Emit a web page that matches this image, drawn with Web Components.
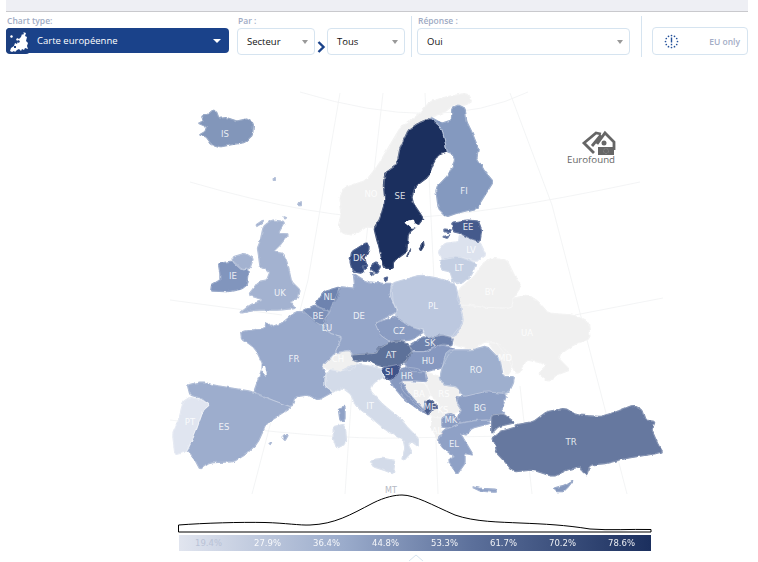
<!DOCTYPE html>
<html lang="fr">
<head>
<meta charset="utf-8">
<title>Carte européenne</title>
<style>
	html, body { margin: 0; padding: 0; background: #fff; font-family: "Open Sans", "Noto Sans", sans-serif; }
	body { width: 758px; height: 562px; overflow: hidden; }
</style>
</head>
<body>
<chart-toolbar>
	<chart-type-select label="Chart type:">Carte européenne</chart-type-select>
	<toolbar-field label="Par :">
		<field-select style="width:78px">Secteur</field-select>
		<svg width="12" height="27" viewBox="0 0 12 27"><path d="M3.500 14l5 5-5 5" fill="none" stroke="#1a428a" stroke-width="2.400"/></svg>
		<field-select style="width:78px">Tous</field-select>
	</toolbar-field>
	<toolbar-divider style="margin-left:6px"></toolbar-divider>
	<toolbar-field label="Réponse :" style="margin-left:5px">
		<field-select style="width:213px">Oui</field-select>
	</toolbar-field>
	<toolbar-divider style="margin-left:11px"></toolbar-divider>
	<eu-toggle style="margin-left:10px">EU only</eu-toggle>
</chart-toolbar>
<euro-map></euro-map>

<script>
// barre du haut
class ChartToolbar extends HTMLElement {
	constructor() {
		super();
		this.attachShadow({mode: "open"});
		this.shadowRoot.innerHTML = `
			<style>
				:host{display:block;height:58px;}
				.band{height:11px;margin:0 10px 0 6px;background:#eeeff4;border-bottom:1px solid #c9c9cd;}
				.row{display:flex;align-items:flex-start;height:42px;margin-top:4px;padding-left:6px;}
			</style>
			<div class="band"></div>
			<div class="row"><slot></slot></div>
		`;
	}
}

class ToolbarField extends HTMLElement {
	constructor() {
		super();
		this.attachShadow({mode: "open"});
		this.shadowRoot.innerHTML = `
			<style>
				:host{display:block;}
				.label{height:12px;padding-left:1px;font:600 8.500px/9px "Open Sans",sans-serif;color:#a0abc4;}
				.controls{display:flex;}
			</style>
			<div class="label"></div>
			<div class="controls"><slot></slot></div>
		`;
		this.shadowRoot.querySelector('.label').textContent = this.getAttribute('label');
	}
}

class ChartTypeSelect extends HTMLElement {
	constructor() {
		super();
		this.attachShadow({mode: "open"});
		this.shadowRoot.innerHTML = `
			<style>
				:host{display:block;width:223px;margin-right:8px;}
				.label{height:12px;padding-left:1px;font:600 8.500px/9px "Open Sans",sans-serif;color:#a0abc4;}
				.box{display:flex;align-items:center;height:25px;background:#1a428a;border-radius:4px;color:#fff;font:500 9.500px "Open Sans",sans-serif;}
				.icon{display:flex;flex:none;width:24px;height:26px;margin-right:7px;border-radius:4px 0 4px 4px;background:#1c3f80;}
				.text{flex:1;}
				.arrow{width:0;height:0;margin-right:8px;border:4px solid transparent;border-top:4px solid #fff;border-bottom:0;}
			</style>
			<div class="label"></div>
			<div class="box">
				<div class="icon">
					<svg width="24" height="26" viewBox="0 0 24 26">
						<path fill="#fff" d="M4 8l2-1 1 2-2 1zM17 4l3 1-1 3 2 1-1 4 2 2-1 3 1 3-3-1-1 2-2-1-1 2-2-2-2 1-2 2-1-1-2 1-2-1 1-3 3-2 1-3 2 1 1-3-2-1 1-2 2 1 2-2 1-3 1 1 1-2z"/>
						<path fill="#1c3f80" d="M12 12l2 1-1 2-2-1zM8 18l2 0 0 2-2 0z"/>
					</svg>
				</div>
				<div class="text"><slot></slot></div>
				<div class="arrow"></div>
			</div>
		`;
		this.shadowRoot.querySelector('.label').textContent = this.getAttribute('label');
	}
}

class FieldSelect extends HTMLElement {
	constructor() {
		super();
		this.attachShadow({mode: "open"});
		this.shadowRoot.innerHTML = `
			<style>
				:host{display:flex;align-items:center;box-sizing:border-box;height:27px;padding:0 6px 0 9px;background:#fff;border:1px solid #d6e4f0;border-radius:4px;color:#111;font:9.500px "Open Sans",sans-serif;}
				.text{flex:1;}
				.arrow{width:0;height:0;border:3px solid transparent;border-top:4px solid #999;border-bottom:0;}
			</style>
			<div class="text"><slot></slot></div>
			<div class="arrow"></div>
		`;
	}
}

class ToolbarDivider extends HTMLElement {
	constructor() {
		super();
		this.attachShadow({mode: "open"});
		this.shadowRoot.innerHTML = `<style>:host{display:block;width:1px;height:41px;background:#d6e4f0;}</style>`;
	}
}

class EuToggle extends HTMLElement {
	constructor() {
		super();
		this.attachShadow({mode: "open"});
		let stars = '';
		for (let i = 0; i < 12; i++) {
			const a = i * Math.PI / 6;
			stars += `<circle cx="${(7.500 + 6 * Math.cos(a)).toFixed(2)}" cy="${(7.500 + 6 * Math.sin(a)).toFixed(2)}" r=".85"/>`;
		}
		this.shadowRoot.innerHTML = `
			<style>
				:host{display:flex;align-items:center;box-sizing:border-box;width:96px;height:28px;margin-top:11px;padding:0 7px 0 11px;border:1px solid #d6e4f0;border-radius:4px;color:#a3adc6;font:600 8.500px "Open Sans",sans-serif;}
				svg{flex:none;}
				.text{margin-left:auto;}
			</style>
			<svg width="15" height="15" viewBox="0 0 15 15" fill="#23509a">${stars}<rect x="6.800" y="3.500" width="1.400" height="5"/><rect x="6.800" y="9.800" width="1.400" height="1.500"/></svg>
			<div class="text"><slot></slot></div>
		`;
	}
}

// chaque forme est notee dans le repere d'un recadrage 3x de la capture
const FRAMES = {a: [170, 85], b: [370, 85], c: [170, 270], d: [400, 270]};
const GREY = '#f0f0f0';
const SHAPES = [
	// hors donnees
	['a', GREY, '590,425 550,450 515,445 505,425 515,380 510,340 520,310 590,285 625,240 660,180 690,130 745,90 780,50 830,35 890,25 905,50 885,60 850,60 825,80 790,95 745,115 715,135 690,190 680,240 645,265 640,340 630,400 615,430'],
	['d', GREY, '222,20 250,-20 270,-35 320,-30 350,30 365,45 340,85 335,115 255,112 205,105 180,105 170,85 180,55'],
	['d', GREY, '180,105 255,112 335,115 340,85 385,75 415,95 445,130 520,135 565,155 570,205 520,225 470,260 510,300 470,315 445,335 415,310 440,285 410,275 380,270 350,315 320,260 290,220 255,215 215,240 165,225 155,200 190,155'],
	['d', GREY, '265,218 300,222 325,250 340,280 318,318 305,280 290,255'],
	['d', GREY, '-3,335 75,340 90,370 75,395 72,425 40,395 10,365'],
	['d', GREY, '75,305 120,320 130,345 170,350 180,375 170,395 185,420 150,435 120,430 115,400 90,370 80,340'],
	['d', GREY, '115,400 120,430 150,435 125,445 95,440 85,430'],
	['d', GREY, '95,440 125,445 125,470 125,500 115,515 95,480'],
	['c', GREY, '455,288 495,250 540,240 545,255 548,270 560,275 555,295 530,300 510,303 478,298'],
	// pays
	['a', '#8296ba', '85,115 100,110 95,90 115,88 135,70 147,100 170,98 200,108 230,102 250,115 248,150 225,172 190,178 150,186 125,178 108,155 88,150 105,140 110,125'],
	['a', '#a3b2d0', '310,280 316,278 316,286 310,286'],
	['a', '#a3b2d0', '388,354 394,350 394,362 386,362'],
	['a', '#a3b2d0', '258,420 280,405 278,415 262,425'],
	['a', '#a3b2d0', '342,395 350,398 345,402'],
	['a', '#a3b2d0', '270,470 280,425 305,405 345,410 325,445 357,447 330,480 310,500 340,505 352,535 365,590 390,615 385,640 360,650 375,670 330,675 260,675 210,685 240,660 280,645 235,630 265,590 290,585 300,560 270,545 265,505 262,490'],
	['a', '#8195bd', '145,535 190,528 215,552 235,555 230,600 215,612 175,620 122,618 125,600 150,585 150,565'],
	['a', '#a3b2d0', '190,515 225,505 250,520 240,550 215,555 190,532'],
	['b', '#1b2f5e', '145,115 180,100 215,130 225,170 232,200 205,210 190,235 175,275 135,305 125,335 130,355 160,400 145,420 115,445 110,500 70,530 70,550 45,550 35,520 22,470 12,430 30,400 45,350 40,300 45,265 80,240 90,190 115,135'],
	['b', '#fff', '105,412 130,405 133,415 148,424 125,430 115,420'],
	['b', '#1b2f5e', '148,490 160,468 162,482 152,497'],
	['b', '#1b2f5e', '110,515 122,490 118,508'],
	['b', '#8499bf', '180,95 215,115 245,105 245,70 265,60 285,70 290,110 305,140 325,190 320,220 345,260 370,290 345,330 320,370 260,385 230,395 205,370 197,310 235,270 255,225 245,205 232,200 225,170 215,130'],
	['b', '#dce2ee', '205,500 225,475 265,470 270,448 300,462 330,472 348,510 320,530 270,515 215,525'],
	['b', '#c3cee2', '208,525 265,515 318,535 305,570 275,595 250,590 240,560 215,555'],
	['b', '#455a8c', '245,412 290,405 325,408 335,435 330,470 300,460 270,445 250,440'],
	['b', '#455a8c', '222,432 245,435 240,443 222,440'],
	['b', '#455a8c', '218,455 238,450 232,460'],
	['c', '#95a6c9', '510,50 555,55 550,10 590,35 640,40 665,40 670,100 680,125 615,160 630,195 660,215 625,240 620,250 545,255 540,240 495,248 518,200 480,190 470,165 460,150 478,130 490,100'],
	['a', '#33497d', '545,500 590,472 598,490 585,520 590,545 575,565 548,560 540,530'],
	['a', '#33497d', '602,540 620,530 632,545 618,566 602,555'],
	['a', '#33497d', '576,542 588,542 590,553 580,553'],
	['a', '#33497d', '642,580 653,576 650,588'],
	['a', '#33497d', '600,565 612,568 606,572'],
	['c', '#98a9cb', '212,185 285,175 288,155 305,170 335,160 378,125 400,125 450,165 480,190 515,200 495,248 455,290 470,320 465,350 490,365 445,390 415,375 375,380 365,410 320,395 250,370 280,285 255,235 215,205'],
	['c', '#fff', '275,300 283,290 289,316'],
	['c', '#8fa1c6', '505,415 525,408 525,450 510,452'],
	['c', '#9dadcd', '52,345 95,335 130,345 250,365 320,395 365,412 330,435 290,460 262,520 225,555 190,575 120,578 90,598 75,570 50,540 75,490 100,420 118,405 95,385 60,375'],
	['c', '#9dadcd', '335,500 355,495 345,512'],
	['c', '#9dadcd', '297,520 305,518 302,524'],
	['c', '#e0e5f0', '40,395 60,382 95,390 118,405 100,420 75,490 50,545 15,555 8,490 25,450'],
	['c', '#6e83af', '435,105 460,65 510,50 505,80 485,105 478,125 440,110'],
	['c', '#7d91b9', '400,122 435,105 478,122 465,150 475,170 440,160 420,140'],
	['c', '#8a9dc2', '460,160 475,165 480,185 465,180'],
	['d', '#bcc8df', '-25,40 60,15 115,25 165,40 180,100 190,155 165,200 125,195 85,205 70,180 30,170 -15,140 -10,120 -30,75'],
	['c', '#8a9cc2', '615,160 675,140 720,170 762,185 725,210 680,215 660,215 630,195'],
	['d', '#6e82ac', '28,225 70,200 85,205 125,195 160,205 155,225 125,222 75,245 40,245'],
	['d', '#8698c0', '18,260 35,245 75,245 125,225 165,235 145,255 125,295 75,305 35,305 18,290'],
	['c', '#5d7199', '545,255 620,250 625,235 680,210 720,225 725,245 705,280 640,290 620,285 590,270 560,275 548,270'],
	['c', '#8799c0', '682,312 700,290 740,295 765,305 775,335 730,332 692,332 720,375 770,430 755,425 700,385 675,355 660,335'],
	['c', '#3f5389', '635,295 695,280 680,315 660,330 640,320'],
	['c', '#d3dbe9', '465,320 478,298 510,305 555,282 600,288 635,298 642,320 610,340 600,362 640,405 690,445 715,475 745,505 745,530 725,515 715,525 725,545 705,568 695,570 705,535 700,510 650,482 600,440 558,408 542,372 515,352 490,368 465,350'],
	['c', '#d3dbe9', '598,570 640,565 675,572 670,612 640,600 610,590'],
	['c', '#d3dbe9', '490,470 525,462 530,520 500,535 490,505'],
	['d', '#9eafce', '140,240 215,240 260,228 300,270 310,320 343,320 340,340 325,370 255,365 190,380 170,350 130,345 120,320'],
	['d', '#8d9fc4', '170,380 190,380 255,365 320,372 305,420 315,430 275,435 270,450 230,450 180,458 175,440 185,420 170,395'],
	['d', '#8b9dc3', '125,445 150,430 175,440 180,460 150,475 125,470'],
	['d', '#4a5e8e', '75,395 90,390 115,410 95,420 85,435 72,425'],
	['d', '#8fa1c6', '115,515 130,480 180,460 230,452 265,450 272,460 215,475 200,495 180,490 190,505 220,555 195,550 195,580 170,615 145,570 165,560 130,535'],
	['d', '#8fa1c6', '213,650 240,655 290,658 285,667 240,663'],
	['d', '#66789f', '275,435 310,432 345,458 295,470 275,490'],
	['d', '#66789f', '345,465 400,455 440,425 495,415 530,435 600,440 650,425 700,405 725,420 735,450 765,455 755,480 775,525 788,545 770,550 740,555 680,565 620,580 570,585 560,615 548,605 540,590 500,600 460,620 400,600 340,605 310,570 290,550 285,520 275,505 300,485 350,470'],
	['d', '#8497bd', '460,655 495,645 520,630 505,650 490,665 470,665']
];
const GRATICULE = [
	'M300 92Q440 135 528 92', 'M190 182Q320 220 400 218T640 182',
	'M170 300L282 315', 'M575 315L663 298', 'M170 420Q330 440 400 438L560 435',
	'M340 93L308 280L252 494', 'M383 93L366 242', 'M425 93L435 300', 'M510 93L552 205L627 494',
	'M352 390L345 494', 'M520 386L532 494', 'M436 440L438 494'
];
const LABELS = [
	['IS', 225, 134], ['NO', 371, 194], ['SE', 400, 196], ['FI', 464, 191], ['EE', 468, 227], ['LV', 471, 250],
	['LT', 459, 268], ['DK', 359, 258], ['IE', 233, 276], ['UK', 280, 293], ['NL', 329, 297], ['BE', 318, 316],
	['LU', 327, 328], ['DE', 359, 316], ['PL', 433, 306], ['BY', 490, 292], ['UA', 527, 333], ['CZ', 399, 331],
	['SK', 430, 343], ['AT', 391, 355], ['HU', 428, 361], ['FR', 294, 359], ['CH', 338, 359], ['SI', 389, 372],
	['HR', 407, 376], ['RO', 476, 370], ['MD', 505, 358], ['BA', 419, 394], ['RS', 444, 394], ['ME', 430, 407],
	['KS', 443, 410], ['BG', 480, 408], ['MK', 451, 420], ['AL', 437, 431], ['EL', 454, 444], ['IT', 370, 406],
	['ES', 224, 427], ['PT', 190, 422], ['TR', 571, 442]
];
const TICKS = ['19.4%', '27.9%', '36.4%', '44.8%', '53.3%', '61.7%', '70.2%', '78.6%'];

// arrondit les angles des contours
function smooth(points) {
	const out = [];
	points.forEach((p, i) => {
		const n = points[(i + 1) % points.length];
		out.push([p[0] * .88 + n[0] * .12, p[1] * .88 + n[1] * .12]);
		out.push([p[0] * .12 + n[0] * .88, p[1] * .12 + n[1] * .88]);
	});
	return out;
}

class EuroMap extends HTMLElement {
	constructor() {
		super();
		this.attachShadow({mode: "open"});

		const outlines = SHAPES.map(([frame, fill, pts]) => {
			const [dx, dy] = FRAMES[frame];
			const page = pts.split(' ').map(p => {
				const [x, y] = p.split(',').map(Number);
				return [dx + x / 3, dy + y / 3];
			});
			return [fill, smooth(page).map(p => p[0].toFixed(1) + ',' + p[1].toFixed(1)).join(' ')];
		});
		// d'abord le fond (bord de la couleur du pays pour fermer les joints), puis les frontieres
		const shapes = outlines.map(([fill, pts]) => `<polygon points="${pts}" fill="${fill}" stroke="${fill}" stroke-width="1.300"/>`).join('');
		const borders = outlines.map(([fill, pts]) => `<polygon points="${pts}" fill="none" stroke="#fff" stroke-opacity=".45" stroke-width=".5"/>`).join('');
		const lines = GRATICULE.map(d => `<path d="${d}"/>`).join('');
		const labels = LABELS.map(([t, x, y]) => `<text x="${x}" y="${y + 3}">${t}</text>`).join('');
		const ticks = TICKS.map(t => `<span>${t}</span>`).join('');

		this.shadowRoot.innerHTML = `
			<style>
				:host{display:block;position:relative;height:504px;}
				svg{display:block;}
				.lines path{fill:none;stroke:#f0f1f3;stroke-width:.8;}
				.land polygon{stroke-linejoin:round;}
				.labels text{font:8.500px "DejaVu Sans",sans-serif;fill:#fff;fill-opacity:.85;text-anchor:middle;}
				.logo text{font:9.700px "Open Sans",sans-serif;fill:#666;}
				.mt{font:8px "DejaVu Sans",sans-serif;fill:#b5b9c4;text-anchor:middle;}
				.legend{position:absolute;left:179px;top:477px;display:flex;box-sizing:border-box;width:472px;height:16px;align-items:center;background:linear-gradient(90deg,#e1e5ef,#9aabcb 35%,#5c709b 62%,#1b2f5e);color:#fff;font:8.500px "DejaVu Sans",sans-serif;}
				.legend span{flex:1;text-align:center;opacity:.9;}
				.legend span:first-child{color:#b9c2d6;opacity:1;}
			</style>
			<svg width="758" height="504" viewBox="0 58 758 504">
				<defs>
					<clipPath id="cut"><rect x="0" y="58" width="758" height="436"/></clipPath>
					<filter id="coast" filterUnits="userSpaceOnUse" x="150" y="70" width="540" height="430" color-interpolation-filters="sRGB">
						<feTurbulence type="fractalNoise" baseFrequency=".16" numOctaves="2" seed="4"/>
						<feDisplacementMap in="SourceGraphic" scale="3" xChannelSelector="R" yChannelSelector="G"/>
						<feGaussianBlur stdDeviation=".25"/>
					</filter>
				</defs>
				<g class="lines" clip-path="url(#cut)">${lines}</g>
				<g clip-path="url(#cut)"><g class="land" filter="url(#coast)">${shapes}${borders}</g></g>
				<g class="labels">${labels}</g>
				<g class="logo">
					<path d="M601 134L596 133L584 143L594 153M592 146L601 135M597 144L605 133L614 142V150" fill="none" stroke="#666" stroke-width="2.800"/>
					<circle cx="604" cy="143" r="2.500" fill="#666"/>
					<rect x="598" y="147" width="16" height="8" fill="#666"/>
					<circle cx="606" cy="151" r="2.500" fill="none" stroke="#aaa" stroke-width=".6" stroke-dasharray=".7 .7"/>
					<text x="567" y="163">Eurofound</text>
				</g>
				<text class="mt" x="391" y="493">MT</text>
				<path d="M178.500 525C205 523 240 522 265 522.500C285 523 300 525.500 310 525C335 524 350 515 373 503C385 497 395 495 402 495C415 495 432 505 455 515C475 522 500 522 520 523C545 524 565 525 590 529C610 530.500 630 529 651 529.500V532H178.500Z" fill="#fff" stroke="#000" stroke-width="1"/>
			</svg>
			<div class="legend">${ticks}</div>
			<svg style="position:absolute;left:408px;top:495px" width="16" height="9" viewBox="0 0 16 9"><path d="M1 8L8 2L15 8" fill="none" stroke="#d6e4f0"/></svg>
		`;
	}
}

customElements.define('chart-toolbar', ChartToolbar);
customElements.define('toolbar-field', ToolbarField);
customElements.define('chart-type-select', ChartTypeSelect);
customElements.define('field-select', FieldSelect);
customElements.define('toolbar-divider', ToolbarDivider);
customElements.define('eu-toggle', EuToggle);
customElements.define('euro-map', EuroMap);
</script>
</body>
</html>
